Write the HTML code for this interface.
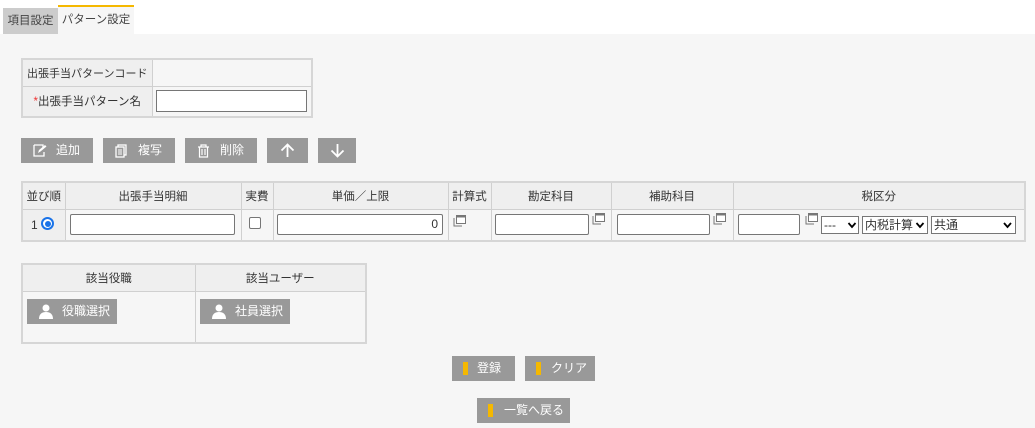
<!DOCTYPE html>
<html><head><meta charset="utf-8"><style>
*{box-sizing:border-box;margin:0;padding:0}
body{width:1035px;height:428px;background:#f6f6f6;font-family:"Liberation Sans","Noto Sans CJK JP",sans-serif;font-size:12px;color:#333;position:relative;overflow:hidden}
.a{position:absolute}
.top{left:0;top:0;width:1035px;height:34px;background:#fff}
.tab1{left:3px;top:8px;width:55px;height:26px;background:#ccc;line-height:26px;text-align:center;font-size:11.5px;color:#444;white-space:nowrap}
.tab2{left:58px;top:5px;width:76px;height:29px;background:#f6f6f6;border-top:2px solid #f5b800;line-height:27px;text-align:center;font-size:11.5px;color:#444;white-space:nowrap}
table{border-collapse:collapse;position:absolute;background:#f6f6f6;table-layout:fixed}
td,th{border:1px solid #d0d0d0;font-weight:normal;font-size:11.5px;white-space:nowrap;overflow:hidden}
th{background:#efefef}
.btn{position:absolute;background:#999;color:#fff;height:25px;line-height:25px;font-size:12px;white-space:nowrap}
.inp{position:absolute;background:#fff;border:1px solid #767676;border-radius:2px;height:21px}
.sel{position:absolute;background:#fff;border:1px solid #767676;height:18px;font-size:12px;line-height:16px;padding-left:2px;white-space:nowrap;overflow:hidden}
.y{position:absolute;left:11px;top:6px;width:5px;height:13px;background:#f5b800}
.pop{position:absolute;width:13px;height:12px}
</style></head><body>
<div class="a top"></div>
<div class="a tab1">項目設定</div>
<div class="a tab2">パターン設定</div>

<table style="left:21px;top:58px;width:292px;border:2px solid #d6d6d6">
<colgroup><col style="width:130px"><col></colgroup>
<tr style="height:27px"><th style="text-align:left;padding-left:4px;font-size:11px">出張手当パターンコード</th><td></td></tr>
<tr style="height:31px"><th style="text-align:center;font-size:11.5px"><span style="color:#e33">*</span>出張手当パターン名</th><td></td></tr>
</table>
<div class="inp" style="left:156px;top:90px;width:151px;height:22px;border-radius:0"></div>

<div class="btn" style="left:21px;top:138px;width:72px"><svg class="a" style="left:12px;top:6px" width="14" height="13" viewBox="0 0 14 13"><path d="M1 1h9v3M1 1v11h10v-4" fill="none" stroke="#fff" stroke-width="1.3"/><path d="M5 9l1-3 6-5 1.5 1.5-6 5z" fill="#fff"/></svg><span class="a" style="left:35px">追加</span></div>
<div class="btn" style="left:103px;top:138px;width:72px"><svg class="a" style="left:12px;top:6px" width="13" height="14" viewBox="0 0 13 14"><rect x="3" y="1" width="8" height="10" fill="none" stroke="#fff" stroke-width="1.3"/><rect x="1" y="3" width="8" height="10" fill="#999" stroke="#fff" stroke-width="1.3"/><path d="M3 6h4M3 8h4M3 10h4" stroke="#fff"/></svg><span class="a" style="left:35px">複写</span></div>
<div class="btn" style="left:185px;top:138px;width:72px"><svg class="a" style="left:12px;top:6px" width="13" height="14" viewBox="0 0 13 14"><path d="M1 3h11M4 3V1h5v2M2.5 3v10h8V3M5 5v6M8 5v6" fill="none" stroke="#fff" stroke-width="1.2"/></svg><span class="a" style="left:35px">削除</span></div>
<div class="btn" style="left:267px;top:138px;width:41px"><svg class="a" style="left:13px;top:5px" width="15" height="15" viewBox="0 0 15 15"><path d="M7.5 14V1.5M1.5 7.5l6-6 6 6" fill="none" stroke="#fff" stroke-width="1.8"/></svg></div>
<div class="btn" style="left:318px;top:138px;width:38px"><svg class="a" style="left:12px;top:5px" width="15" height="15" viewBox="0 0 15 15"><path d="M7.5 1v12.5M1.5 7.5l6 6 6-6" fill="none" stroke="#fff" stroke-width="1.8"/></svg></div>

<table style="left:21px;top:181px;width:1005px;border:2px solid #d6d6d6">
<colgroup><col style="width:43px"><col style="width:176px"><col style="width:32px"><col style="width:175px"><col style="width:43px"><col style="width:120px"><col style="width:122px"><col></colgroup>
<tr style="height:27px"><th>並び順</th><th>出張手当明細</th><th>実費</th><th>単価／上限</th><th>計算式</th><th>勘定科目</th><th>補助科目</th><th>税区分</th></tr>
<tr style="height:32px"><th></th><td></td><td></td><td></td><td></td><td></td><td></td><td></td></tr>
</table>
<span class="a" style="left:31px;top:218px;font-size:12px">1</span>
<div class="a" style="left:41px;top:217px;width:13px;height:13px;border-radius:50%;border:2px solid #1a73e8;background:#fff"><div class="a" style="left:1.5px;top:1.5px;width:6px;height:6px;border-radius:50%;background:#1a73e8"></div></div>
<div class="inp" style="left:70px;top:214px;width:165px"></div>
<div class="a" style="left:249px;top:217px;width:12px;height:12px;border:1px solid #767676;border-radius:2px;background:#fff"></div>
<div class="inp" style="left:277px;top:214px;width:166px;text-align:right;padding-right:4px;line-height:19px;font-size:12px">0</div>
<div class="inp" style="left:495px;top:214px;width:94px"></div>
<div class="inp" style="left:617px;top:214px;width:93px"></div>
<div class="inp" style="left:738px;top:214px;width:62px"></div>
<svg class="pop" style="left:453px;top:215px" viewBox="0 0 13 12"><path d="M1 3v8h8" fill="none" stroke="#777"/><rect x="3.5" y="0.5" width="9" height="8" fill="#fff" stroke="#777"/><rect x="3.5" y="0.5" width="9" height="2" fill="#777"/></svg>
<svg class="pop" style="left:592px;top:213px" viewBox="0 0 13 12"><path d="M1 3v8h8" fill="none" stroke="#777"/><rect x="3.5" y="0.5" width="9" height="8" fill="#fff" stroke="#777"/><rect x="3.5" y="0.5" width="9" height="2" fill="#777"/></svg>
<svg class="pop" style="left:713px;top:213px" viewBox="0 0 13 12"><path d="M1 3v8h8" fill="none" stroke="#777"/><rect x="3.5" y="0.5" width="9" height="8" fill="#fff" stroke="#777"/><rect x="3.5" y="0.5" width="9" height="2" fill="#777"/></svg>
<svg class="pop" style="left:805px;top:213px" viewBox="0 0 13 12"><path d="M1 3v8h8" fill="none" stroke="#777"/><rect x="3.5" y="0.5" width="9" height="8" fill="#fff" stroke="#777"/><rect x="3.5" y="0.5" width="9" height="2" fill="#777"/></svg>
<div class="sel" style="left:821px;top:216px;width:38px">---</div>
<div class="sel" style="left:862px;top:216px;width:66px">内税計算</div>
<div class="sel" style="left:931px;top:216px;width:85px">共通</div>
<svg class="a" style="left:847px;top:222px;background:#fff" width="10" height="7" viewBox="0 0 9 7"><path d="M1 1l3.5 4L8 1" fill="none" stroke="#000" stroke-width="1.8"/></svg>
<svg class="a" style="left:915px;top:222px;background:#fff" width="10" height="7" viewBox="0 0 9 7"><path d="M1 1l3.5 4L8 1" fill="none" stroke="#000" stroke-width="1.8"/></svg>
<svg class="a" style="left:1003px;top:222px" width="9" height="7" viewBox="0 0 9 7"><path d="M1 1l3.5 4L8 1" fill="none" stroke="#000" stroke-width="1.8"/></svg>

<table style="left:21px;top:263px;width:346px;border:2px solid #d6d6d6">
<colgroup><col style="width:173px"><col></colgroup>
<tr style="height:27px"><th>該当役職</th><th>該当ユーザー</th></tr>
<tr style="height:52px"><td></td><td></td></tr>
</table>
<div class="btn" style="left:27px;top:299px;width:90px;height:25px"><svg class="a" style="left:12px;top:5px" width="14" height="15" viewBox="0 0 14 15"><circle cx="7" cy="4" r="3.5" fill="#fff"/><path d="M0 15c0-5 3-7 7-7s7 2 7 7z" fill="#fff"/></svg><span class="a" style="left:35px">役職選択</span></div>
<div class="btn" style="left:200px;top:299px;width:90px;height:25px"><svg class="a" style="left:12px;top:5px" width="14" height="15" viewBox="0 0 14 15"><circle cx="7" cy="4" r="3.5" fill="#fff"/><path d="M0 15c0-5 3-7 7-7s7 2 7 7z" fill="#fff"/></svg><span class="a" style="left:35px">社員選択</span></div>

<div class="btn" style="left:452px;top:356px;width:63px"><div class="y"></div><span class="a" style="left:25px">登録</span></div>
<div class="btn" style="left:525px;top:356px;width:70px"><div class="y"></div><span class="a" style="left:26px">クリア</span></div>
<div class="btn" style="left:477px;top:398px;width:93px"><div class="y"></div><span class="a" style="left:27px">一覧へ戻る</span></div>
</body></html>
